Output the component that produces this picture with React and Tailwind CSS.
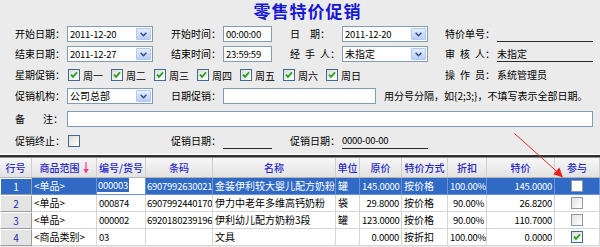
import React from 'react';

// Shared font stack for the whole dialog
const FONT = "font-['Noto_Sans_CJK_SC','Noto_Sans',sans-serif]";
// Narrower digits, closer to the SimSun figures of the original
const NUM = 'text-[9.5px] tracking-[-0.25px]';

function Label({ chars, gap = 'gap-0', width = 'w-[52px]' }) {
  return (
    <div className={`${width} shrink-0 flex items-center leading-[16px]`}>
      <span className={`flex ${gap}`}>
        {chars.map((c, i) => (
          <span key={i}>{c}</span>
        ))}
      </span>
      <span>：</span>
    </div>
  );
}

function Chevron() {
  return (
    <svg width="7" height="5" viewBox="0 0 7 5">
      <path d="M0.6 0.8 L3.5 3.7 L6.4 0.8" stroke="#2b4886" strokeWidth="1.4" fill="none" />
    </svg>
  );
}

function Combo({ value, num = false }) {
  return (
    <div className="w-[86px] h-[16px] shrink-0 flex border border-[#7f9db9] bg-white">
      <div className={`flex-1 pl-[2px] leading-[14px] whitespace-nowrap overflow-hidden ${num ? NUM : ''}`}>{value}</div>
      <div className="w-[15px] m-[1px] flex items-center justify-center rounded-[1px] border border-[#b4c7ef] bg-gradient-to-b from-[#e6eefe] to-[#b9cdf8]">
        <Chevron />
      </div>
    </div>
  );
}

function Input({ value = '', width }) {
  return (
    <div className={`${width} h-[16px] shrink-0 border border-[#7f9db9] bg-white pl-[2px] leading-[14px] whitespace-nowrap overflow-hidden ${NUM}`}>
      {value}
    </div>
  );
}

function Underline({ value = '', width, num = false }) {
  return (
    <div className={`${width} h-[16px] shrink-0 border-b border-[#2a2a2a] leading-[15px] whitespace-nowrap ${num ? NUM : ''}`}>
      {value}
    </div>
  );
}

function Check({ checked = false, tone = 'form' }) {
  const box =
    tone === 'form'
      ? 'border-[#3f6b95] bg-gradient-to-br from-[#dedcd6] to-white'
      : tone === 'white'
      ? 'border-[#8d99a6] bg-white'
      : 'border-[#8d99a6] bg-gradient-to-br from-[#e2e2e2] to-white';
  return (
    <div className={`w-[12px] h-[12px] shrink-0 border ${box} flex items-center justify-center`}>
      {checked && (
        <svg width="8" height="8" viewBox="0 0 8 8">
          <path d="M1 3.6 L3 5.8 L7 1.4" stroke="#22a022" strokeWidth="1.8" fill="none" />
        </svg>
      )}
    </div>
  );
}

const WEEK = ['周一', '周二', '周三', '周四', '周五', '周六', '周日'];

const COLS =
  'grid grid-cols-[32px_65px_49px_67px_123px_24px_42px_46px_39px_68px_45px]';

const ROWS = [
  { no: 1, range: '<单品>', code: '000003', bar: '6907992630021', name: '金装伊利较大婴儿配方奶粉2段', unit: '罐', price: '145.0000', mode: '按价格', off: '100.00%', sp: '145.0000', join: false },
  { no: 2, range: '<单品>', code: '000874', bar: '6907992440170', name: '伊力中老年多维高钙奶粉', unit: '袋', price: '29.8000', mode: '按价格', off: '90.00%', sp: '26.8200', join: false },
  { no: 3, range: '<单品>', code: '000002', bar: '6920180239196', name: '伊利幼儿配方奶粉3段', unit: '罐', price: '123.0000', mode: '按价格', off: '90.00%', sp: '110.7000', join: false },
  { no: 4, range: '<商品类别>', code: '03', bar: '', name: '文具', unit: '', price: '0.0000', mode: '按折扣', off: '100.00%', sp: '0.0000', join: true },
];

function HeaderCell({ children }) {
  return (
    <div className="h-[19px] flex items-center justify-center border-r border-[#cfcfcf] text-[#2828c4] font-medium leading-[19px]">
      {children}
    </div>
  );
}

function PinkArrow() {
  return (
    <svg width="6" height="12" viewBox="0 0 6 12" className="ml-[3px]">
      <path d="M3 0 V8" stroke="#ff3399" strokeWidth="1.2" />
      <path d="M0.3 7 L5.7 7 L3 11.8 Z" fill="#ff3399" />
    </svg>
  );
}

function DataRow({ r }) {
  const sel = r.no === 1;
  const cell = `h-[17px] border-r border-b px-[2px] leading-[16px] whitespace-nowrap overflow-hidden ${
    sel ? 'border-[#6d92d3] bg-[#316ac5] text-white' : 'border-[#d6d6d6] bg-white text-black'
  }`;
  return (
    <>
      <div
        className={`h-[17px] text-center leading-[15px] border border-t-white border-l-white border-r-[#9c9c9c] border-b-[#9c9c9c] ${
          sel ? 'bg-[#316ac5] text-white' : 'bg-[#e4e4e4] text-[#2424a8]'
        }`}
      >
        {r.no}
      </div>
      <div className={cell}>{r.range}</div>
      {sel ? (
        <div className={`h-[17px] border-r border-b border-[#6d92d3] bg-white leading-[14px] overflow-hidden ${NUM}`}>
          <span className="bg-[#316ac5] text-white px-[1px]">{r.code}</span>
        </div>
      ) : (
        <div className={`${cell} ${NUM}`}>{r.code}</div>
      )}
      <div className={`${cell} pl-[1px] ${NUM}`}>{r.bar}</div>
      <div className={cell}>{r.name}</div>
      <div className={cell}>{r.unit}</div>
      <div className={`${cell} text-right ${NUM}`}>{r.price}</div>
      <div className={cell}>{r.mode}</div>
      <div className={`${cell} text-right ${NUM}`}>{r.off}</div>
      <div className={`${cell} text-right ${NUM}`}>{r.sp}</div>
      <div className={`${cell} flex items-center justify-center`}>
        <Check checked={r.join} tone={sel ? 'white' : r.join ? 'form' : 'grid'} />
      </div>
    </>
  );
}

export default function App() {
  return (
    <div className={`relative w-[600px] h-[247px] overflow-hidden bg-[#ebebeb] text-[10px] text-black ${FONT}`}>
      {/* Form */}
      <div className="h-[154px] pl-[15px]">
        <div className="h-[22px] flex items-center justify-center text-[17px] leading-[22px] font-bold tracking-[1px] text-[#1717d4]">
          零售特价促销
        </div>

        <div className="mt-[4px] flex items-center h-[16px]">
          <Label chars={['开', '始', '日', '期']} />
          <Combo value="2011-12-20" num />
          <div className="w-[18px] shrink-0" />
          <Label chars={['开', '始', '时', '间']} />
          <Input value="00:00:00" width="w-[49px]" />
          <div className="w-[18px] shrink-0" />
          <Label chars={['日', '期']} gap="gap-[10px]" />
          <Combo value="2011-12-20" num />
          <div className="w-[17px] shrink-0" />
          <Label chars={['特', '价', '单', '号']} />
          <Underline width="w-[96px]" />
        </div>

        <div className="mt-[4px] flex items-center h-[16px]">
          <Label chars={['结', '束', '日', '期']} />
          <Combo value="2011-12-27" num />
          <div className="w-[18px] shrink-0" />
          <Label chars={['结', '束', '时', '间']} />
          <Input value="23:59:59" width="w-[49px]" />
          <div className="w-[18px] shrink-0" />
          <Label chars={['经', '手', '人']} gap="gap-[5px]" />
          <Combo value="未指定" />
          <div className="w-[17px] shrink-0" />
          <Label chars={['审', '核', '人']} gap="gap-[5px]" />
          <Underline value="未指定" width="w-[96px]" />
        </div>

        <div className="mt-[5px] flex items-center h-[16px]">
          <Label chars={['星', '期', '促', '销']} width="w-[53px]" />
          <div className="w-[377px] shrink-0 flex">
            {WEEK.map((d) => (
              <div key={d} className="w-[43px] shrink-0 flex items-center gap-[3px]">
                <Check checked />
                <span>{d}</span>
              </div>
            ))}
          </div>
          <Label chars={['操', '作', '员']} gap="gap-[5px]" />
          <span className="leading-[16px]">系统管理员</span>
        </div>

        <div className="mt-[5px] flex items-center h-[16px]">
          <Label chars={['促', '销', '机', '构']} />
          <Combo value="公司总部" />
          <div className="w-[18px] shrink-0" />
          <Label chars={['日', '期', '促', '销']} />
          <Input width="w-[153px]" />
          <span className="ml-[8px] whitespace-nowrap leading-[16px]">用分号分隔，如{'{2;3;}'}，不填写表示全部日期。</span>
        </div>

        <div className="mt-[7px] flex items-center h-[16px]">
          <Label chars={['备', '注']} gap="gap-[18px]" />
          <Input width="w-[526px]" />
        </div>

        <div className="mt-[6px] flex items-center h-[16px]">
          <Label chars={['促', '销', '终', '止']} width="w-[53px]" />
          <div className="w-[103px] shrink-0 flex">
            <Check />
          </div>
          <Label chars={['促', '销', '日', '期']} />
          <Underline width="w-[49px]" />
          <div className="w-[18px] shrink-0" />
          <Label chars={['促', '销', '日', '期']} />
          <Underline value="0000-00-00" width="w-[86px]" num />
        </div>
      </div>

      {/* Divider above grid */}
      <div className="h-[1px] bg-white" />
      <div className="h-[2px] bg-[#2e2e2e]" />
      <div className="h-[1px] bg-[#8c8c8c]" />

      {/* Grid */}
      <div className={`${COLS} bg-gradient-to-b from-[#f7f7f7] to-[#e2e2e2] border-b border-[#b5b5b5]`}>
        <HeaderCell>行号</HeaderCell>
        <HeaderCell>
          商品范围
          <PinkArrow />
        </HeaderCell>
        <HeaderCell>编号/货号</HeaderCell>
        <HeaderCell>条码</HeaderCell>
        <HeaderCell>名称</HeaderCell>
        <HeaderCell>单位</HeaderCell>
        <HeaderCell>原价</HeaderCell>
        <HeaderCell>特价方式</HeaderCell>
        <HeaderCell>折扣</HeaderCell>
        <HeaderCell>特价</HeaderCell>
        <HeaderCell>参与</HeaderCell>
      </div>
      <div className={COLS}>
        {ROWS.map((r) => (
          <DataRow key={r.no} r={r} />
        ))}
      </div>

      {/* Red annotation arrow */}
      <svg className="absolute left-0 top-0 pointer-events-none" width="600" height="247" viewBox="0 0 600 247">
        <line x1="514.5" y1="133.5" x2="558" y2="172.5" stroke="#e02a2a" strokeWidth="1" />
        <path d="M563 177.5 L553.2 174.2 L559.4 167.6 Z" fill="#e82020" />
      </svg>
    </div>
  );
}
